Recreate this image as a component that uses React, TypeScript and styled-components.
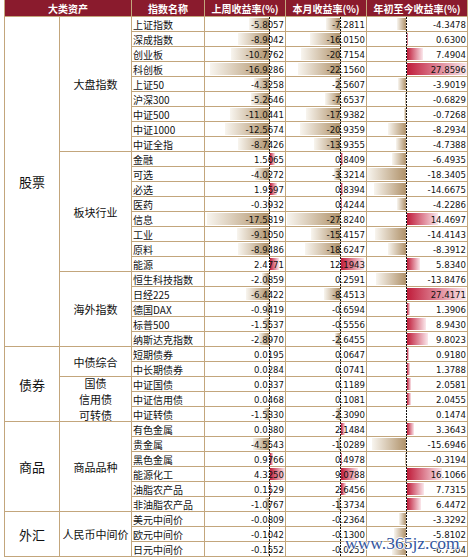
import React from 'react';
import styled, {createGlobalStyle} from 'styled-components';

type Row = {name: string; w: number; m: number; y: number};
type Sub = {labels: string[]; rows: Row[]};
type Group = {name: string; subs: Sub[]};

const r = (name: string, w: number, m: number, y: number): Row => ({name, w, m, y});

const groups: Group[] = [
  {
    name: '股票',
    subs: [
      {
        labels: ['大盘指数'],
        rows: [
          r('上证指数', -5.8057, -7.2811, -4.3478),
          r('深成指数', -8.9042, -16.015, 0.63),
          r('创业板', -10.7762, -20.7154, 7.4904),
          r('科创板', -16.9286, -22.156, 27.8596),
          r('上证50', -4.3258, -2.5607, -3.9019),
          r('沪深300', -5.2646, -7.6537, -0.6829),
          r('中证500', -11.0441, -17.9382, -0.7268),
          r('中证1000', -12.5674, -20.9359, -8.2934),
          r('中证全指', -8.7426, -13.9355, -4.7388),
        ],
      },
      {
        labels: ['板块行业'],
        rows: [
          r('金融', 1.5065, 0.8409, -6.4935),
          r('可选', -4.0272, -3.3214, -18.3405),
          r('必选', 1.9597, 0.8394, -14.6675),
          r('医药', -0.3932, 0.4244, -4.2286),
          r('信息', -17.5819, -27.824, 14.4697),
          r('工业', -9.105, -15.4157, -14.4143),
          r('原料', -8.9486, -18.6247, -8.3912),
          r('能源', 2.4771, 12.1943, 5.834),
        ],
      },
      {
        labels: ['海外指数'],
        rows: [
          r('恒生科技指数', -2.0859, 0.2591, -13.8476),
          r('日经225', -6.4422, -8.4513, 27.4171),
          r('德国DAX', -0.9419, -0.6594, 1.3906),
          r('标普500', -1.5537, -0.5556, 8.943),
          r('纳斯达克指数', -2.897, -2.6455, 9.8023),
        ],
      },
    ],
  },
  {
    name: '债券',
    subs: [
      {
        labels: ['中债综合'],
        rows: [
          r('短期债券', 0.0195, 0.0647, 0.918),
          r('中长期债券', 0.0284, 0.0741, 1.3788),
        ],
      },
      {
        labels: ['国债', '信用债', '可转债'],
        rows: [
          r('中证国债', 0.0337, 0.1189, 2.0581),
          r('中证信用债', 0.0468, 0.1081, 2.0455),
          r('中证转债', -1.533, -2.309, 0.1474),
        ],
      },
    ],
  },
  {
    name: '商品',
    subs: [
      {
        labels: ['商品品种'],
        rows: [
          r('有色金属', 0.038, 2.1484, 3.3643),
          r('贵金属', -4.5543, -1.0289, -15.6946),
          r('黑色金属', 0.9766, 0.4978, -0.3194),
          r('能源化工', 4.325, 9.0788, 16.1066),
          r('油脂农产品', 0.1529, 2.6456, 7.7315),
          r('非油脂农产品', -1.0767, -1.3734, 6.4472),
        ],
      },
    ],
  },
  {
    name: '外汇',
    subs: [
      {
        labels: ['人民币中间价'],
        rows: [
          r('美元中间价', -0.0809, -0.2364, -3.3292),
          r('欧元中间价', -0.1042, -0.13, -5.8102),
          r('日元中间价', -0.1552, -0.0255, -6.7304),
        ],
      },
    ],
  },
];

// where the zero line sits in each value column, and px per 1%
const valueCols: {key: 'w' | 'm' | 'y'; col: number; axis: number; scale: number}[] = [
  {key: 'w', col: 4, axis: 64, scale: 3.5},
  {key: 'm', col: 5, axis: 54, scale: 1.9},
  {key: 'y', col: 6, axis: 39, scale: 2.15},
];

const LINE = '#c3a67c';
const HEAD = '#8a1b2d';

const GlobalStyle = createGlobalStyle`
  body {
    margin: 0;
    background: #fff;
    font-family: "Noto Sans CJK SC", "Liberation Sans", sans-serif;
  }
`;

const Sheet = styled.div`
  position: relative;
  display: grid;
  grid-template-columns: 54px 71px 72px 80px 80px 100px;
  grid-template-rows: 16px repeat(36, 14px);
  gap: 1px;
  width: max-content;
  margin-left: 4px;
  padding: 0 1px 1px 1px;
  background: ${LINE};
`;

const HeadCell = styled.div<{$col: string}>`
  grid-row: 1;
  grid-column: ${p => p.$col};
  display: flex;
  align-items: center;
  justify-content: center;
  background: ${HEAD};
  color: #fff;
  font-size: 10px;
  font-weight: 700;
  white-space: nowrap;
`;

const Cell = styled.div<{$row: number; $span?: number}>`
  grid-row: ${p => `${p.$row} / span ${p.$span ?? 1}`};
  display: flex;
  align-items: center;
  background: #fff;
  color: #111;
  white-space: nowrap;
`;

const GroupCell = styled(Cell)`
  grid-column: 1;
  justify-content: center;
  font-size: 13px;
`;

const SubCell = styled(Cell)`
  grid-column: 2;
  flex-direction: column;
  justify-content: center;
  font-size: 11px;
`;

const SubLabel = styled.span`
  flex: 1;
  display: flex;
  align-items: center;
`;

const NameCell = styled(Cell)`
  grid-column: 3;
  padding-left: 1px;
  font-size: 10px;
`;

const ValueCell = styled(Cell)<{$col: number}>`
  grid-column: ${p => p.$col};
  position: relative;
  justify-content: flex-end;
  padding-right: 1px;
  font-family: "DejaVu Sans Condensed", "DejaVu Sans", sans-serif;
  font-size: 9.5px;
`;

const Num = styled.span`
  position: relative;
  z-index: 1;
`;

const Bar = styled.span<{$neg: boolean}>`
  position: absolute;
  top: 1px;
  bottom: 1px;
  background: ${p =>
    p.$neg
      ? 'linear-gradient(to right, #f8f5ef, #b0926a)'
      : 'linear-gradient(to right, #c01c3a, #fbe8ec)'};
`;

const Axis = styled.span<{$at: number}>`
  position: absolute;
  top: 0;
  bottom: -1px;
  left: ${p => p.$at}px;
  width: 1px;
  z-index: 2;
  background: repeating-linear-gradient(to bottom, #111 0 2px, transparent 2px 3px);
`;

const Watermark = styled.div`
  position: absolute;
  left: 341px;
  top: 535px;
  z-index: 3;
  font-family: "Liberation Serif", serif;
  font-size: 17.5px;
  line-height: 17.5px;
  color: #34569e;
  text-shadow: 1px 0 0 #fff, -1px 0 0 #fff, 0 1px 0 #fff, 0 -1px 0 #fff;
  pointer-events: none;
`;

const Value = ({v, col, axis, scale, row}: {v: number; col: number; axis: number; scale: number; row: number}) => {
  const len = Math.abs(v) * scale;
  const neg = v < 0;
  return (
    <ValueCell $row={row} $col={col}>
      <Bar $neg={neg} style={neg ? {left: axis - len, width: len} : {left: axis + 1, width: len}} />
      <Num>{v.toFixed(4)}</Num>
      <Axis $at={axis} />
    </ValueCell>
  );
};

const App = () => {
  const cells: React.ReactNode[] = [];
  let row = 2;

  groups.forEach(g => {
    const count = g.subs.reduce((n, s) => n + s.rows.length, 0);
    cells.push(<GroupCell key={g.name} $row={row} $span={count}>{g.name}</GroupCell>);
    g.subs.forEach(s => {
      cells.push(
        <SubCell key={s.labels.join()} $row={row} $span={s.rows.length}>
          {s.labels.map(l => <SubLabel key={l}>{l}</SubLabel>)}
        </SubCell>
      );
      s.rows.forEach(item => {
        cells.push(<NameCell key={item.name} $row={row}>{item.name}</NameCell>);
        valueCols.forEach(c => {
          cells.push(
            <Value key={item.name + c.key} v={item[c.key]} col={c.col} axis={c.axis} scale={c.scale} row={row} />
          );
        });
        row++;
      });
    });
  });

  return (
    <>
      <GlobalStyle />
      <Sheet>
        <HeadCell $col="1 / span 2">大类资产</HeadCell>
        <HeadCell $col="3">指数名称</HeadCell>
        <HeadCell $col="4">上周收益率(%)</HeadCell>
        <HeadCell $col="5">本月收益率(%)</HeadCell>
        <HeadCell $col="6">年初至今收益率(%)</HeadCell>
        {cells}
        <Watermark>www.365jz.com</Watermark>
      </Sheet>
    </>
  );
};

export default App;
